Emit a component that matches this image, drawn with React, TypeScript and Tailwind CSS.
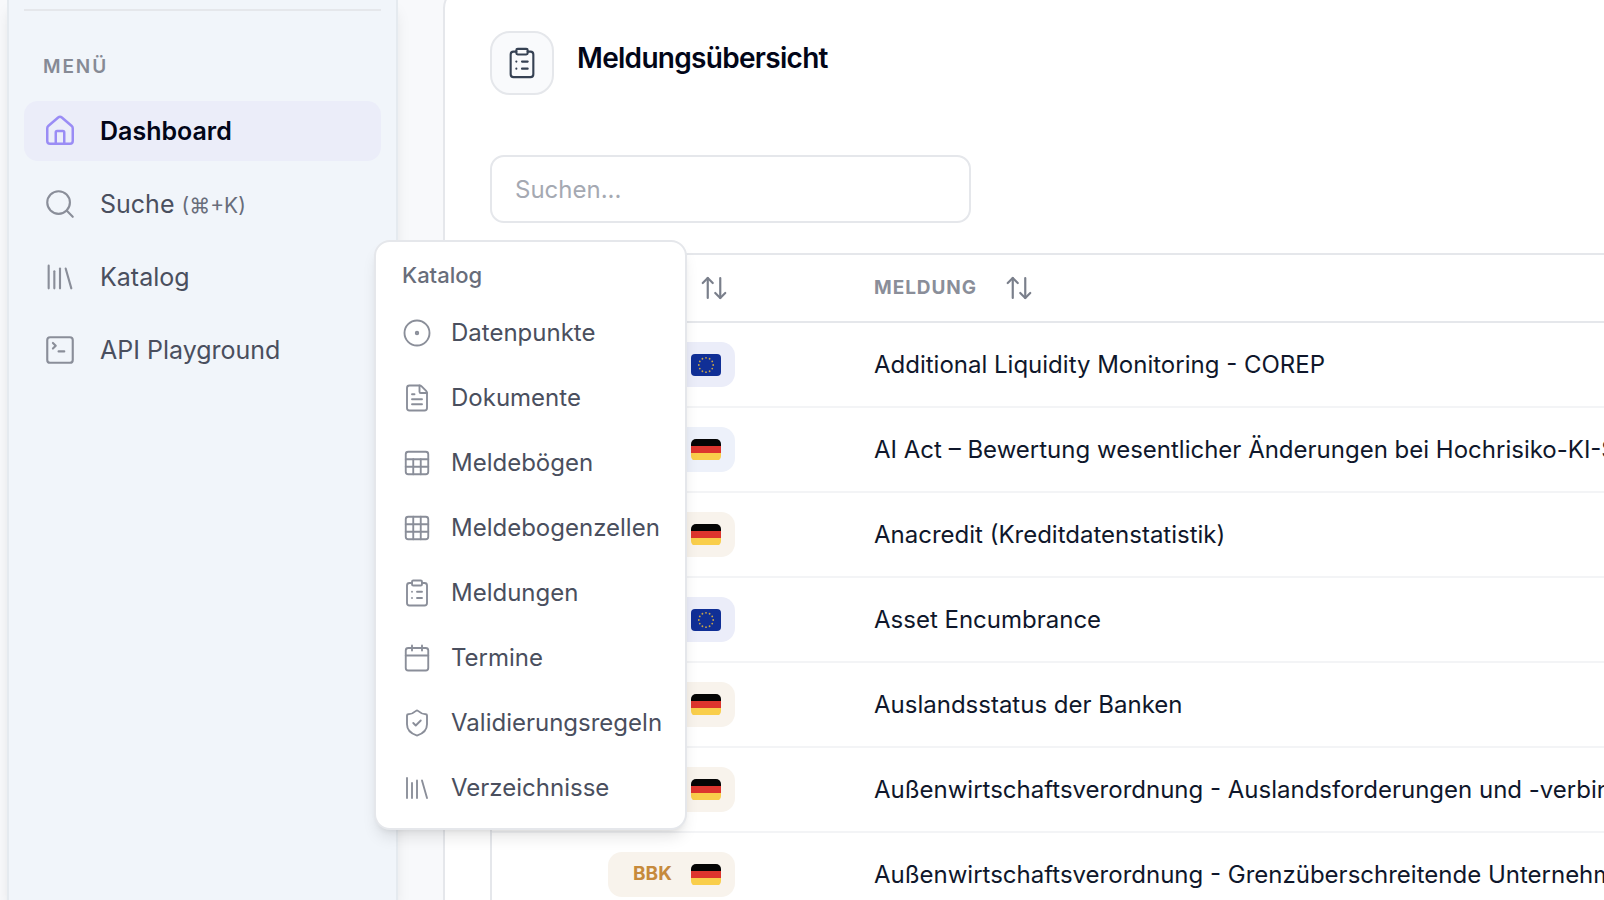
import { useState } from "react"
import {
  ArrowUpDown,
  Calendar,
  CircleDot,
  ClipboardList,
  FileText,
  Grid3x3,
  House,
  Library,
  Search,
  Sheet,
  ShieldCheck,
  SquareTerminal,
} from "lucide-react"

const navItems = [
  { label: "Dashboard", icon: House },
  { label: "Suche", icon: Search, hint: "(⌘+K)" },
  { label: "Katalog", icon: Library },
  { label: "API Playground", icon: SquareTerminal },
]

const catalogItems = [
  { label: "Datenpunkte", icon: CircleDot },
  { label: "Dokumente", icon: FileText },
  { label: "Meldebögen", icon: Sheet },
  { label: "Meldebogenzellen", icon: Grid3x3 },
  { label: "Meldungen", icon: ClipboardList },
  { label: "Termine", icon: Calendar },
  { label: "Validierungsregeln", icon: ShieldCheck },
  { label: "Verzeichnisse", icon: Library },
]

interface Report {
  tone: "violet" | "blue" | "amber"
  flag: "eu" | "de"
  issuer?: string
  name: string
}

const reports: Report[] = [
  { tone: "violet", flag: "eu", name: "Additional Liquidity Monitoring - COREP" },
  { tone: "blue", flag: "de", name: "AI Act – Bewertung wesentlicher Änderungen bei Hochrisiko-KI-Systemen" },
  { tone: "amber", flag: "de", name: "Anacredit (Kreditdatenstatistik)" },
  { tone: "violet", flag: "eu", name: "Asset Encumbrance" },
  { tone: "amber", flag: "de", name: "Auslandsstatus der Banken" },
  { tone: "amber", flag: "de", name: "Außenwirtschaftsverordnung - Auslandsforderungen und -verbindlichkeiten" },
  { tone: "amber", flag: "de", issuer: "BBK", name: "Außenwirtschaftsverordnung - Grenzüberschreitende Unternehmenskredite" },
]

const badgeTones = {
  violet: "bg-[#ebedf9] text-indigo-500",
  blue: "bg-[#edf1fa] text-blue-500",
  amber: "bg-[#f8f3ec] text-[#c68a3c]",
}

function GermanFlag() {
  return (
    <span className="flex h-[22px] w-[30px] flex-col overflow-hidden rounded-[5px]">
      <span className="flex-1 bg-[#050505]" />
      <span className="flex-1 bg-[#dd352e]" />
      <span className="flex-1 bg-[#f9ce4b]" />
    </span>
  )
}

function EuFlag() {
  const stars = Array.from({ length: 12 }, (_, i) => (i * Math.PI) / 6)
  return (
    <svg viewBox="0 0 30 22" className="h-[22px] w-[30px]" aria-hidden="true">
      <rect width="30" height="22" rx="4" fill="#102f96" />
      {stars.map((angle) => (
        <circle key={angle} cx={15 + 7.2 * Math.sin(angle)} cy={11 - 7.2 * Math.cos(angle)} r="0.9" fill="#c9a548" />
      ))}
    </svg>
  )
}

function IssuerBadge({ report }: { report: Report }) {
  return (
    <span
      className={`flex h-[45px] w-[127px] items-center rounded-[14px] pr-[14px] pl-[25px] text-[19px] font-bold ${badgeTones[report.tone]}`}
    >
      {report.issuer}
      <span className="ml-auto">{report.flag === "eu" ? <EuFlag /> : <GermanFlag />}</span>
    </span>
  )
}

function CatalogMenu() {
  return (
    <div className="absolute -top-[7px] left-[350px] w-[313px] rounded-2xl border-2 border-gray-200 bg-white px-[26px] pt-[13px] pb-[8px] shadow-lg">
      <h2 className="mb-[5px] text-[22px] leading-[40px] font-medium text-[#686d7a]">Katalog</h2>
      <ul>
        {catalogItems.map(({ label, icon: Icon }) => (
          <li key={label}>
            <a href="#" className="flex h-[65px] items-center gap-[19px] text-[24px] whitespace-nowrap text-[#4a4f5e]">
              <Icon size={30} strokeWidth={1.5} className="shrink-0 text-[#8a8e99]" />
              {label}
            </a>
          </li>
        ))}
      </ul>
    </div>
  )
}

function Sidebar() {
  const [active, setActive] = useState("Dashboard")

  return (
    <aside className="relative z-10 ml-[7px] w-[391px] shrink-0 border-x-2 border-[#e5eaef] bg-[#f1f5fa] px-[15px] pt-[9px] shadow-lg">
      <hr className="border-t-2 border-gray-200" />
      <h2 className="mt-[40px] ml-[19px] text-[19px] leading-[32px] font-semibold tracking-widest text-[#868a95]">MENÜ</h2>
      <nav className="mt-[18px] flex flex-col gap-[13px]">
        {navItems.map(({ label, icon: Icon, hint }) => (
          <div key={label} className="relative">
            <button
              onClick={() => setActive(label)}
              className={`flex h-[60px] w-full items-center gap-[23px] rounded-[14px] px-[19px] text-[25px] ${
                active === label ? "bg-[#ebedf9] font-semibold text-slate-950" : "text-[#4a4f5e]"
              }`}
            >
              <Icon
                size={34}
                strokeWidth={active === label ? 1.75 : 1.5}
                className={`shrink-0 ${active === label ? "text-[#9a8cf5]" : "text-[#8a8e99]"}`}
              />
              <span className="pt-[2px]">
                {label} {hint && <span className="text-[21px] text-[#686d7a]">{hint}</span>}
              </span>
            </button>
            {label === "Katalog" && <CatalogMenu />}
          </div>
        ))}
      </nav>
    </aside>
  )
}

export default function App() {
  return (
    <div className="flex h-screen overflow-hidden bg-[#f8f9fb] font-['Inter',sans-serif]">
      <Sidebar />

      <main className="ml-[45px] -mt-[12px] min-w-0 flex-1 rounded-tl-[20px] border-t-2 border-l-2 border-gray-200 bg-white pt-[41px] pl-[45px]">
        {/* Page heading */}
        <header className="flex gap-[23px]">
          <div className="flex size-[64px] items-center justify-center rounded-[20px] border-2 border-gray-200 bg-[#f9fafc]">
            <ClipboardList size={34} strokeWidth={1.5} className="text-gray-700" />
          </div>
          <h1 className="mt-[7px] text-[28px] leading-[40px] font-semibold tracking-tight text-slate-950">Meldungsübersicht</h1>
        </header>

        <input
          type="search"
          aria-label="Suchen"
          placeholder="Suchen..."
          className="mt-[60px] block h-[68px] w-[481px] rounded-[14px] border-2 border-gray-200 px-[23px] text-[24px] text-gray-800 placeholder:text-[#a5a9b2]"
        />

        {/* Report list */}
        <div className="mt-[30px] overflow-hidden border-t-2 border-l-2 border-gray-200">
          <table className="w-full table-fixed text-left">
            <thead>
              <tr className="h-[67px] border-b-2 border-gray-200 text-[19px] text-[#8a8e99]">
                <th className="w-[382px] pl-[207px]">
                  <button aria-label="Nach Institution sortieren" className="block">
                    <ArrowUpDown size={30} strokeWidth={1.75} className="text-[#7a7f8b]" />
                  </button>
                </th>
                <th>
                  <button className="flex items-center gap-[27px] font-bold tracking-wider">
                    MELDUNG
                    <ArrowUpDown size={30} strokeWidth={1.75} className="text-[#7a7f8b]" />
                  </button>
                </th>
              </tr>
            </thead>
            <tbody>
              {reports.map((report) => (
                <tr key={report.name} className="h-[85px] border-b-2 border-gray-100">
                  <td className="pl-[116px]">
                    <IssuerBadge report={report} />
                  </td>
                  <td className="overflow-hidden text-[24px] whitespace-nowrap text-slate-900">{report.name}</td>
                </tr>
              ))}
            </tbody>
          </table>
        </div>
      </main>
    </div>
  )
}
